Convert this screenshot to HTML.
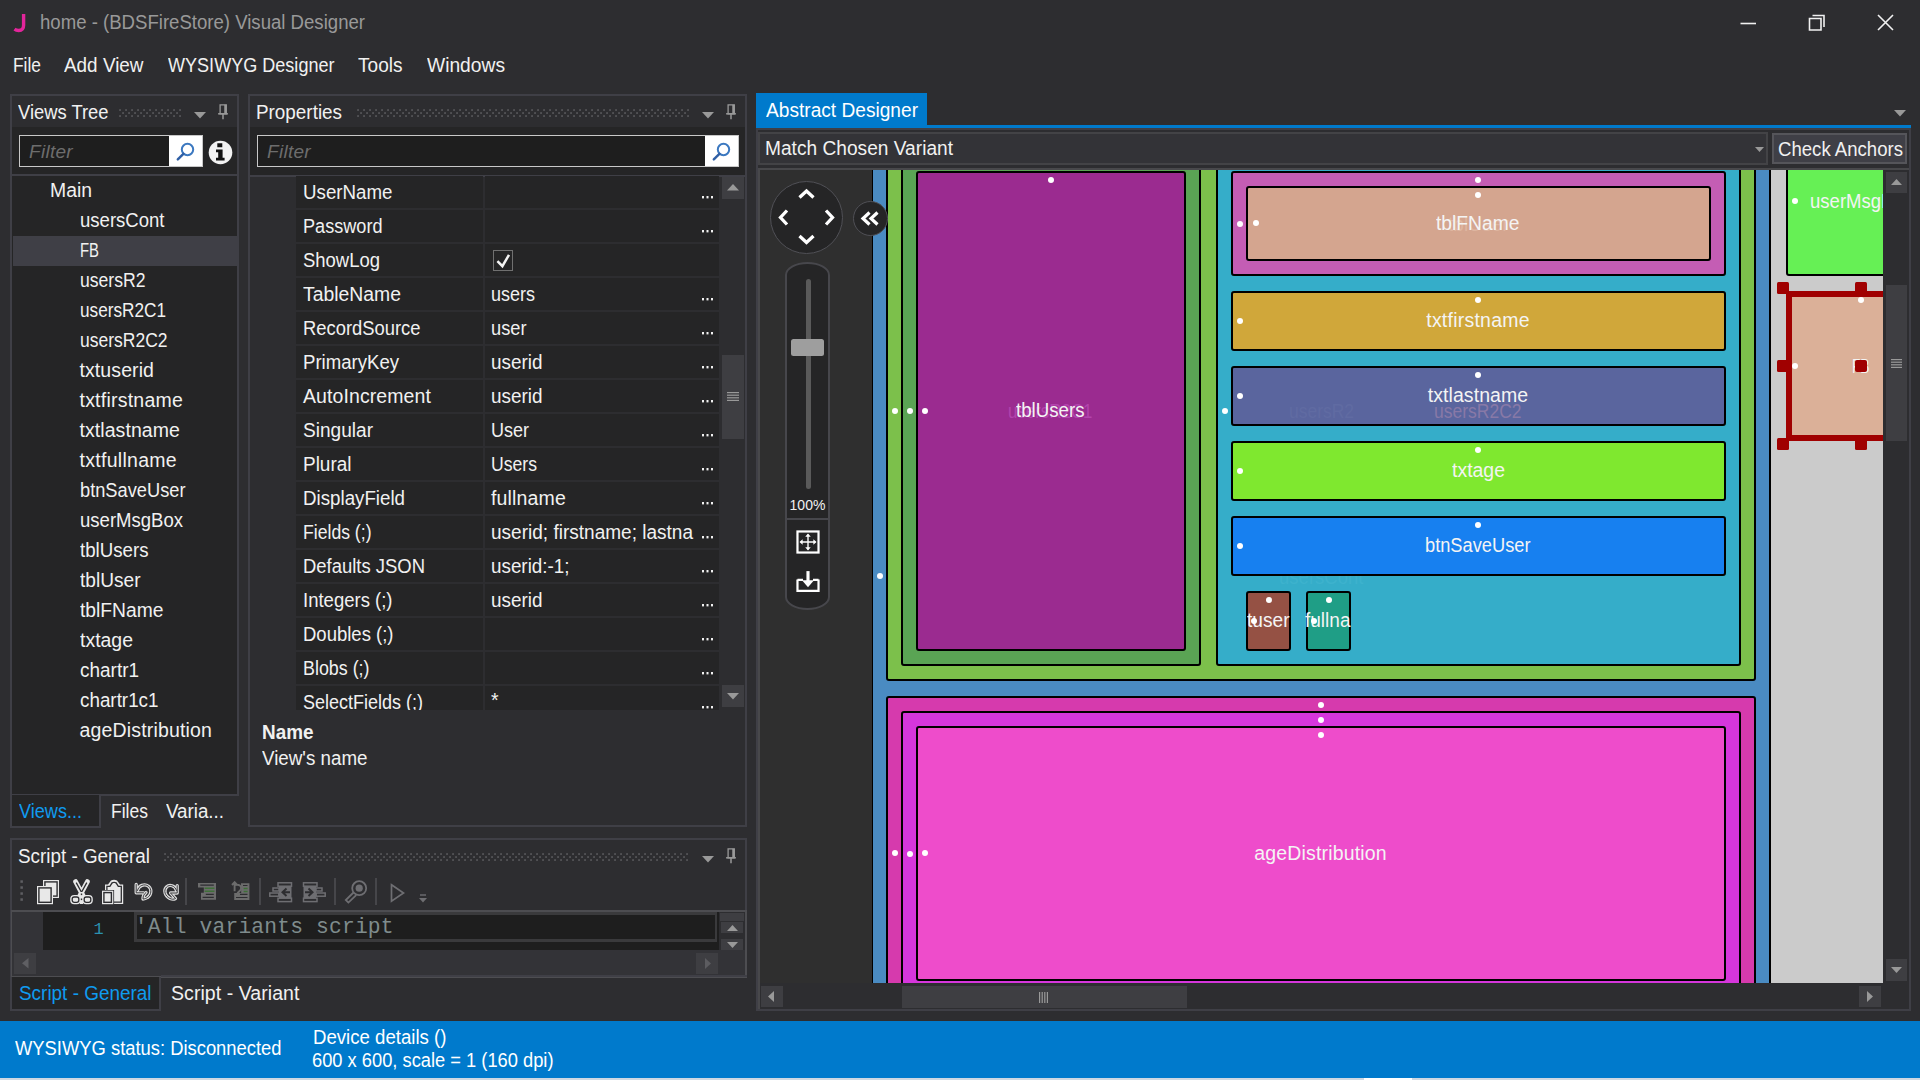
<!DOCTYPE html>
<html><head><meta charset="utf-8"><title>home - (BDSFireStore) Visual Designer</title>
<style>
html,body{margin:0;padding:0;width:1920px;height:1080px;overflow:hidden;background:#2d2d30;}
body{position:relative;font-family:"Liberation Sans",sans-serif;}
div,svg{position:absolute;box-sizing:border-box;}
</style></head><body>

<svg style="left:13px;top:13px;" width="14" height="20" viewBox="0 0 14 20"><path d="M10.6 1v11.3c0 3.6-2.1 5.2-4.9 5.2-1.6 0-3-.4-4.2-1.3" fill="none" stroke="#e3259b" stroke-width="3.4"/></svg>
<div style="left:40.00px;top:10.20px;font-size:19.5px;line-height:25px;color:#999999;white-space:nowrap;transform:scaleX(0.9530);transform-origin:0 0;">home - (BDSFireStore) Visual Designer</div>
<svg style="left:1735px;top:10px;" width="170" height="26" viewBox="0 0 170 26"><path d="M5.5 13.5H21" stroke="#f1f1f1" stroke-width="1.6" fill="none"/><path d="M77.5 5.5h11.5v11.5 M74.5 8.5h11.5v11.5h-11.5z" stroke="#f1f1f1" stroke-width="1.6" fill="none"/><path d="M143 5l15 15M158 5l-15 15" stroke="#f1f1f1" stroke-width="1.6" fill="none"/></svg>
<div style="left:13.00px;top:53.20px;font-size:19.5px;line-height:25px;color:#f1f1f1;white-space:nowrap;transform:scaleX(0.8911);transform-origin:0 0;">File</div>
<div style="left:64.00px;top:53.20px;font-size:19.5px;line-height:25px;color:#f1f1f1;white-space:nowrap;transform:scaleX(0.9692);transform-origin:0 0;">Add View</div>
<div style="left:168.00px;top:53.20px;font-size:19.5px;line-height:25px;color:#f1f1f1;white-space:nowrap;transform:scaleX(0.9257);transform-origin:0 0;">WYSIWYG Designer</div>
<div style="left:358.00px;top:53.20px;font-size:19.5px;line-height:25px;color:#f1f1f1;white-space:nowrap;transform:scaleX(0.9775);transform-origin:0 0;">Tools</div>
<div style="left:427.00px;top:53.20px;font-size:19.5px;line-height:25px;color:#f1f1f1;white-space:nowrap;transform:scaleX(0.9860);transform-origin:0 0;">Windows</div>
<div style="left:10px;top:94px;width:229px;height:702px;background:#2d2d30;border:2px solid #3f3f46;"></div>
<div style="left:12px;top:127px;width:225px;height:48px;background:#252526;"></div>
<div style="left:18.00px;top:99.70px;font-size:19.5px;line-height:25px;color:#f1f1f1;white-space:nowrap;transform:scaleX(0.9417);transform-origin:0 0;">Views Tree</div>
<svg style="left:119px;top:109px;" width="62" height="8" viewBox="0 0 62 8"><defs><pattern id="g10_94" width="6" height="6" patternUnits="userSpaceOnUse"><rect x="0.2" y="0.2" width="1.7" height="1.7" fill="#58585c"/><rect x="3.2" y="3.2" width="1.7" height="1.7" fill="#58585c"/></pattern></defs><rect width="62" height="8" fill="url(#g10_94)"/></svg>
<svg style="left:194px;top:112px;" width="12" height="7" viewBox="0 0 12 7"><path d="M0 0h12l-6 6.5z" fill="#999"/></svg>
<svg style="left:217px;top:103px;" width="12" height="17" viewBox="0 0 12 17"><path d="M3.1 1.8h6.2v9h-6.2z" fill="none" stroke="#999" stroke-width="1.3"/><path d="M8.4 1.8v9" stroke="#999" stroke-width="2.3"/><path d="M1.1 10.8h9.8" stroke="#999" stroke-width="1.5"/><path d="M6 11v5.2" stroke="#999" stroke-width="1.5"/></svg>
<div style="left:19px;top:135px;width:183.5px;height:32px;background:#1e1e1e;border:1px solid #c8c8c8;"></div>
<div style="left:168.5px;top:136px;width:33px;height:30px;background:#ffffff;"></div>
<svg style="left:173.9px;top:141.3px;" width="22" height="22" viewBox="0 0 22 22"><circle cx="13.5" cy="8.5" r="5.7" fill="none" stroke="#3b78c0" stroke-width="2"/><path d="M9.4 12.8L3.8 18.4" stroke="#2f5fa5" stroke-width="2.4" stroke-linecap="round"/></svg>
<div style="left:29.00px;top:139.20px;font-size:19px;line-height:25px;color:#6d6d6d;white-space:nowrap;letter-spacing:0.296px;font-style:italic;">Filter</div>
<svg style="left:208px;top:140px;" width="25" height="25" viewBox="0 0 25 25"><circle cx="12.5" cy="12.5" r="11.8" fill="#f2f2f2"/><path d="M9.3 3.3h5v4h-5z M8 9.6h6.6v8.2h2v2.6H8v-2.6h2.2v-5.6H8z" fill="#111"/></svg>
<div style="left:12px;top:174px;width:225px;height:620px;background:#252526;border-top:2px solid #3f3f46;"></div>
<div style="left:13px;top:236px;width:224px;height:30px;background:#3f3f46;"></div>
<div style="left:49.50px;top:178.20px;font-size:19.5px;line-height:25px;color:#f1f1f1;white-space:nowrap;transform:scaleX(0.9937);transform-origin:0 0;">Main</div>
<div style="left:79.50px;top:208.20px;font-size:19.5px;line-height:25px;color:#f1f1f1;white-space:nowrap;transform:scaleX(0.9508);transform-origin:0 0;">usersCont</div>
<div style="left:79.50px;top:238.20px;font-size:19.5px;line-height:25px;color:#f1f1f1;white-space:nowrap;transform:scaleX(0.7625);transform-origin:0 0;">FB</div>
<div style="left:79.50px;top:268.20px;font-size:19.5px;line-height:25px;color:#f1f1f1;white-space:nowrap;transform:scaleX(0.9021);transform-origin:0 0;">usersR2</div>
<div style="left:79.50px;top:298.20px;font-size:19.5px;line-height:25px;color:#f1f1f1;white-space:nowrap;transform:scaleX(0.8817);transform-origin:0 0;">usersR2C1</div>
<div style="left:79.50px;top:328.20px;font-size:19.5px;line-height:25px;color:#f1f1f1;white-space:nowrap;transform:scaleX(0.8971);transform-origin:0 0;">usersR2C2</div>
<div style="left:79.50px;top:358.20px;font-size:19.5px;line-height:25px;color:#f1f1f1;white-space:nowrap;letter-spacing:0.089px;">txtuserid</div>
<div style="left:79.50px;top:388.20px;font-size:19.5px;line-height:25px;color:#f1f1f1;white-space:nowrap;letter-spacing:0.227px;">txtfirstname</div>
<div style="left:79.50px;top:418.20px;font-size:19.5px;line-height:25px;color:#f1f1f1;white-space:nowrap;letter-spacing:0.072px;">txtlastname</div>
<div style="left:79.50px;top:448.20px;font-size:19.5px;line-height:25px;color:#f1f1f1;white-space:nowrap;letter-spacing:0.292px;">txtfullname</div>
<div style="left:79.50px;top:478.20px;font-size:19.5px;line-height:25px;color:#f1f1f1;white-space:nowrap;transform:scaleX(0.9359);transform-origin:0 0;">btnSaveUser</div>
<div style="left:79.50px;top:508.20px;font-size:19.5px;line-height:25px;color:#f1f1f1;white-space:nowrap;transform:scaleX(0.9504);transform-origin:0 0;">userMsgBox</div>
<div style="left:79.50px;top:538.20px;font-size:19.5px;line-height:25px;color:#f1f1f1;white-space:nowrap;transform:scaleX(0.9578);transform-origin:0 0;">tblUsers</div>
<div style="left:79.50px;top:568.20px;font-size:19.5px;line-height:25px;color:#f1f1f1;white-space:nowrap;transform:scaleX(0.9795);transform-origin:0 0;">tblUser</div>
<div style="left:79.50px;top:598.20px;font-size:19.5px;line-height:25px;color:#f1f1f1;white-space:nowrap;transform:scaleX(0.9879);transform-origin:0 0;">tblFName</div>
<div style="left:79.50px;top:628.20px;font-size:19.5px;line-height:25px;color:#f1f1f1;white-space:nowrap;transform:scaleX(0.9977);transform-origin:0 0;">txtage</div>
<div style="left:79.50px;top:658.20px;font-size:19.5px;line-height:25px;color:#f1f1f1;white-space:nowrap;transform:scaleX(0.9721);transform-origin:0 0;">chartr1</div>
<div style="left:79.50px;top:688.20px;font-size:19.5px;line-height:25px;color:#f1f1f1;white-space:nowrap;transform:scaleX(0.9657);transform-origin:0 0;">chartr1c1</div>
<div style="left:79.50px;top:718.20px;font-size:19.5px;line-height:25px;color:#f1f1f1;white-space:nowrap;letter-spacing:0.162px;">ageDistribution</div>
<div style="left:10px;top:794px;width:91px;height:34px;background:#252526;border:2px solid #3f3f46;border-top:1px solid #3f3f46;"></div>
<div style="left:18.50px;top:798.70px;font-size:19.5px;line-height:25px;color:#0f9bf0;white-space:nowrap;transform:scaleX(0.9276);transform-origin:0 0;">Views...</div>
<div style="left:111.00px;top:798.70px;font-size:19.5px;line-height:25px;color:#f1f1f1;white-space:nowrap;transform:scaleX(0.8987);transform-origin:0 0;">Files</div>
<div style="left:166.00px;top:798.70px;font-size:19.5px;line-height:25px;color:#f1f1f1;white-space:nowrap;transform:scaleX(0.9614);transform-origin:0 0;">Varia...</div>
<div style="left:247.5px;top:94px;width:499.5px;height:733px;background:#2d2d30;border:2px solid #3f3f46;"></div>
<div style="left:249.5px;top:127px;width:495.5px;height:48px;background:#252526;"></div>
<div style="left:256.00px;top:99.70px;font-size:19.5px;line-height:25px;color:#f1f1f1;white-space:nowrap;transform:scaleX(0.9677);transform-origin:0 0;">Properties</div>
<svg style="left:357px;top:109px;" width="332" height="8" viewBox="0 0 332 8"><defs><pattern id="g248_94" width="6" height="6" patternUnits="userSpaceOnUse"><rect x="0.2" y="0.2" width="1.7" height="1.7" fill="#58585c"/><rect x="3.2" y="3.2" width="1.7" height="1.7" fill="#58585c"/></pattern></defs><rect width="332" height="8" fill="url(#g248_94)"/></svg>
<svg style="left:702px;top:112px;" width="12" height="7" viewBox="0 0 12 7"><path d="M0 0h12l-6 6.5z" fill="#999"/></svg>
<svg style="left:725px;top:103px;" width="12" height="17" viewBox="0 0 12 17"><path d="M3.1 1.8h6.2v9h-6.2z" fill="none" stroke="#999" stroke-width="1.3"/><path d="M8.4 1.8v9" stroke="#999" stroke-width="2.3"/><path d="M1.1 10.8h9.8" stroke="#999" stroke-width="1.5"/><path d="M6 11v5.2" stroke="#999" stroke-width="1.5"/></svg>
<div style="left:257px;top:135px;width:482px;height:32px;background:#1e1e1e;border:1px solid #c8c8c8;"></div>
<div style="left:705px;top:136px;width:33px;height:30px;background:#ffffff;"></div>
<svg style="left:710.4px;top:141.3px;" width="22" height="22" viewBox="0 0 22 22"><circle cx="13.5" cy="8.5" r="5.7" fill="none" stroke="#3b78c0" stroke-width="2"/><path d="M9.4 12.8L3.8 18.4" stroke="#2f5fa5" stroke-width="2.4" stroke-linecap="round"/></svg>
<div style="left:267.00px;top:139.20px;font-size:19px;line-height:25px;color:#6d6d6d;white-space:nowrap;letter-spacing:0.296px;font-style:italic;">Filter</div>
<div style="left:249.5px;top:175px;width:495.5px;height:535px;background:#2d2d30;border-top:2px solid #3f3f46;overflow:hidden;"></div>
<div style="left:296px;top:176px;width:187px;height:32px;background:#252526;"></div>
<div style="left:485px;top:176px;width:234px;height:32px;background:#252526;"></div>
<div style="left:0;top:0;width:1920px;height:710px;overflow:hidden;background:none;">
<div style="left:303.00px;top:180.20px;font-size:19.5px;line-height:25px;color:#f1f1f1;white-space:nowrap;transform:scaleX(0.9604);transform-origin:0 0;">UserName</div>
<svg style="left:702px;top:196px;" width="12" height="3" viewBox="0 0 12 3"><rect x="0" y="0" width="2" height="2.4" fill="#f1f1f1"/><rect x="4.5" y="0" width="2" height="2.4" fill="#f1f1f1"/><rect x="9" y="0" width="2" height="2.4" fill="#f1f1f1"/></svg>
</div>
<div style="left:296px;top:210px;width:187px;height:32px;background:#252526;"></div>
<div style="left:485px;top:210px;width:234px;height:32px;background:#252526;"></div>
<div style="left:0;top:0;width:1920px;height:710px;overflow:hidden;background:none;">
<div style="left:303.00px;top:214.20px;font-size:19.5px;line-height:25px;color:#f1f1f1;white-space:nowrap;transform:scaleX(0.9285);transform-origin:0 0;">Password</div>
<svg style="left:702px;top:230px;" width="12" height="3" viewBox="0 0 12 3"><rect x="0" y="0" width="2" height="2.4" fill="#f1f1f1"/><rect x="4.5" y="0" width="2" height="2.4" fill="#f1f1f1"/><rect x="9" y="0" width="2" height="2.4" fill="#f1f1f1"/></svg>
</div>
<div style="left:296px;top:244px;width:187px;height:32px;background:#252526;"></div>
<div style="left:485px;top:244px;width:234px;height:32px;background:#252526;"></div>
<div style="left:0;top:0;width:1920px;height:710px;overflow:hidden;background:none;">
<div style="left:303.00px;top:248.20px;font-size:19.5px;line-height:25px;color:#f1f1f1;white-space:nowrap;transform:scaleX(0.9469);transform-origin:0 0;">ShowLog</div>
<div style="left:493px;top:250px;width:20px;height:21px;background:#252526;border:1.5px solid #707070;"></div>
<svg style="left:495px;top:252px;" width="16" height="17" viewBox="0 0 16 17"><path d="M2.4 9.2l5 5L14 2.8" stroke="#f4f4f4" stroke-width="2.5" fill="none"/></svg>
</div>
<div style="left:296px;top:278px;width:187px;height:32px;background:#252526;"></div>
<div style="left:485px;top:278px;width:234px;height:32px;background:#252526;"></div>
<div style="left:0;top:0;width:1920px;height:710px;overflow:hidden;background:none;">
<div style="left:303.00px;top:282.20px;font-size:19.5px;line-height:25px;color:#f1f1f1;white-space:nowrap;transform:scaleX(0.9936);transform-origin:0 0;">TableName</div>
<div style="left:491.00px;top:282.20px;font-size:19.5px;line-height:25px;color:#f1f1f1;white-space:nowrap;transform:scaleX(0.9227);transform-origin:0 0;">users</div>
<svg style="left:702px;top:298px;" width="12" height="3" viewBox="0 0 12 3"><rect x="0" y="0" width="2" height="2.4" fill="#f1f1f1"/><rect x="4.5" y="0" width="2" height="2.4" fill="#f1f1f1"/><rect x="9" y="0" width="2" height="2.4" fill="#f1f1f1"/></svg>
</div>
<div style="left:296px;top:312px;width:187px;height:32px;background:#252526;"></div>
<div style="left:485px;top:312px;width:234px;height:32px;background:#252526;"></div>
<div style="left:0;top:0;width:1920px;height:710px;overflow:hidden;background:none;">
<div style="left:303.00px;top:316.20px;font-size:19.5px;line-height:25px;color:#f1f1f1;white-space:nowrap;transform:scaleX(0.9427);transform-origin:0 0;">RecordSource</div>
<div style="left:491.00px;top:316.20px;font-size:19.5px;line-height:25px;color:#f1f1f1;white-space:nowrap;transform:scaleX(0.9358);transform-origin:0 0;">user</div>
<svg style="left:702px;top:332px;" width="12" height="3" viewBox="0 0 12 3"><rect x="0" y="0" width="2" height="2.4" fill="#f1f1f1"/><rect x="4.5" y="0" width="2" height="2.4" fill="#f1f1f1"/><rect x="9" y="0" width="2" height="2.4" fill="#f1f1f1"/></svg>
</div>
<div style="left:296px;top:346px;width:187px;height:32px;background:#252526;"></div>
<div style="left:485px;top:346px;width:234px;height:32px;background:#252526;"></div>
<div style="left:0;top:0;width:1920px;height:710px;overflow:hidden;background:none;">
<div style="left:303.00px;top:350.20px;font-size:19.5px;line-height:25px;color:#f1f1f1;white-space:nowrap;transform:scaleX(0.9527);transform-origin:0 0;">PrimaryKey</div>
<div style="left:491.00px;top:350.20px;font-size:19.5px;line-height:25px;color:#f1f1f1;white-space:nowrap;transform:scaleX(0.9697);transform-origin:0 0;">userid</div>
<svg style="left:702px;top:366px;" width="12" height="3" viewBox="0 0 12 3"><rect x="0" y="0" width="2" height="2.4" fill="#f1f1f1"/><rect x="4.5" y="0" width="2" height="2.4" fill="#f1f1f1"/><rect x="9" y="0" width="2" height="2.4" fill="#f1f1f1"/></svg>
</div>
<div style="left:296px;top:380px;width:187px;height:32px;background:#252526;"></div>
<div style="left:485px;top:380px;width:234px;height:32px;background:#252526;"></div>
<div style="left:0;top:0;width:1920px;height:710px;overflow:hidden;background:none;">
<div style="left:303.00px;top:384.20px;font-size:19.5px;line-height:25px;color:#f1f1f1;white-space:nowrap;letter-spacing:0.091px;">AutoIncrement</div>
<div style="left:491.00px;top:384.20px;font-size:19.5px;line-height:25px;color:#f1f1f1;white-space:nowrap;transform:scaleX(0.9697);transform-origin:0 0;">userid</div>
<svg style="left:702px;top:400px;" width="12" height="3" viewBox="0 0 12 3"><rect x="0" y="0" width="2" height="2.4" fill="#f1f1f1"/><rect x="4.5" y="0" width="2" height="2.4" fill="#f1f1f1"/><rect x="9" y="0" width="2" height="2.4" fill="#f1f1f1"/></svg>
</div>
<div style="left:296px;top:414px;width:187px;height:32px;background:#252526;"></div>
<div style="left:485px;top:414px;width:234px;height:32px;background:#252526;"></div>
<div style="left:0;top:0;width:1920px;height:710px;overflow:hidden;background:none;">
<div style="left:303.00px;top:418.20px;font-size:19.5px;line-height:25px;color:#f1f1f1;white-space:nowrap;transform:scaleX(0.9784);transform-origin:0 0;">Singular</div>
<div style="left:491.00px;top:418.20px;font-size:19.5px;line-height:25px;color:#f1f1f1;white-space:nowrap;transform:scaleX(0.9230);transform-origin:0 0;">User</div>
<svg style="left:702px;top:434px;" width="12" height="3" viewBox="0 0 12 3"><rect x="0" y="0" width="2" height="2.4" fill="#f1f1f1"/><rect x="4.5" y="0" width="2" height="2.4" fill="#f1f1f1"/><rect x="9" y="0" width="2" height="2.4" fill="#f1f1f1"/></svg>
</div>
<div style="left:296px;top:448px;width:187px;height:32px;background:#252526;"></div>
<div style="left:485px;top:448px;width:234px;height:32px;background:#252526;"></div>
<div style="left:0;top:0;width:1920px;height:710px;overflow:hidden;background:none;">
<div style="left:303.00px;top:452.20px;font-size:19.5px;line-height:25px;color:#f1f1f1;white-space:nowrap;transform:scaleX(0.9728);transform-origin:0 0;">Plural</div>
<div style="left:491.00px;top:452.20px;font-size:19.5px;line-height:25px;color:#f1f1f1;white-space:nowrap;transform:scaleX(0.9034);transform-origin:0 0;">Users</div>
<svg style="left:702px;top:468px;" width="12" height="3" viewBox="0 0 12 3"><rect x="0" y="0" width="2" height="2.4" fill="#f1f1f1"/><rect x="4.5" y="0" width="2" height="2.4" fill="#f1f1f1"/><rect x="9" y="0" width="2" height="2.4" fill="#f1f1f1"/></svg>
</div>
<div style="left:296px;top:482px;width:187px;height:32px;background:#252526;"></div>
<div style="left:485px;top:482px;width:234px;height:32px;background:#252526;"></div>
<div style="left:0;top:0;width:1920px;height:710px;overflow:hidden;background:none;">
<div style="left:303.00px;top:486.20px;font-size:19.5px;line-height:25px;color:#f1f1f1;white-space:nowrap;transform:scaleX(0.9604);transform-origin:0 0;">DisplayField</div>
<div style="left:491.00px;top:486.20px;font-size:19.5px;line-height:25px;color:#f1f1f1;white-space:nowrap;letter-spacing:0.162px;">fullname</div>
<svg style="left:702px;top:502px;" width="12" height="3" viewBox="0 0 12 3"><rect x="0" y="0" width="2" height="2.4" fill="#f1f1f1"/><rect x="4.5" y="0" width="2" height="2.4" fill="#f1f1f1"/><rect x="9" y="0" width="2" height="2.4" fill="#f1f1f1"/></svg>
</div>
<div style="left:296px;top:516px;width:187px;height:32px;background:#252526;"></div>
<div style="left:485px;top:516px;width:234px;height:32px;background:#252526;"></div>
<div style="left:0;top:0;width:1920px;height:710px;overflow:hidden;background:none;">
<div style="left:303.00px;top:520.20px;font-size:19.5px;line-height:25px;color:#f1f1f1;white-space:nowrap;transform:scaleX(0.9032);transform-origin:0 0;">Fields (;)</div>
<div style="left:491.00px;top:520.20px;font-size:19.5px;line-height:25px;color:#f1f1f1;white-space:nowrap;transform:scaleX(0.9758);transform-origin:0 0;">userid; firstname; lastna</div>
<svg style="left:702px;top:536px;" width="12" height="3" viewBox="0 0 12 3"><rect x="0" y="0" width="2" height="2.4" fill="#f1f1f1"/><rect x="4.5" y="0" width="2" height="2.4" fill="#f1f1f1"/><rect x="9" y="0" width="2" height="2.4" fill="#f1f1f1"/></svg>
</div>
<div style="left:296px;top:550px;width:187px;height:32px;background:#252526;"></div>
<div style="left:485px;top:550px;width:234px;height:32px;background:#252526;"></div>
<div style="left:0;top:0;width:1920px;height:710px;overflow:hidden;background:none;">
<div style="left:303.00px;top:554.20px;font-size:19.5px;line-height:25px;color:#f1f1f1;white-space:nowrap;transform:scaleX(0.9460);transform-origin:0 0;">Defaults JSON</div>
<div style="left:491.00px;top:554.20px;font-size:19.5px;line-height:25px;color:#f1f1f1;white-space:nowrap;transform:scaleX(0.9657);transform-origin:0 0;">userid:-1;</div>
<svg style="left:702px;top:570px;" width="12" height="3" viewBox="0 0 12 3"><rect x="0" y="0" width="2" height="2.4" fill="#f1f1f1"/><rect x="4.5" y="0" width="2" height="2.4" fill="#f1f1f1"/><rect x="9" y="0" width="2" height="2.4" fill="#f1f1f1"/></svg>
</div>
<div style="left:296px;top:584px;width:187px;height:32px;background:#252526;"></div>
<div style="left:485px;top:584px;width:234px;height:32px;background:#252526;"></div>
<div style="left:0;top:0;width:1920px;height:710px;overflow:hidden;background:none;">
<div style="left:303.00px;top:588.20px;font-size:19.5px;line-height:25px;color:#f1f1f1;white-space:nowrap;transform:scaleX(0.9493);transform-origin:0 0;">Integers (;)</div>
<div style="left:491.00px;top:588.20px;font-size:19.5px;line-height:25px;color:#f1f1f1;white-space:nowrap;transform:scaleX(0.9697);transform-origin:0 0;">userid</div>
<svg style="left:702px;top:604px;" width="12" height="3" viewBox="0 0 12 3"><rect x="0" y="0" width="2" height="2.4" fill="#f1f1f1"/><rect x="4.5" y="0" width="2" height="2.4" fill="#f1f1f1"/><rect x="9" y="0" width="2" height="2.4" fill="#f1f1f1"/></svg>
</div>
<div style="left:296px;top:618px;width:187px;height:32px;background:#252526;"></div>
<div style="left:485px;top:618px;width:234px;height:32px;background:#252526;"></div>
<div style="left:0;top:0;width:1920px;height:710px;overflow:hidden;background:none;">
<div style="left:303.00px;top:622.20px;font-size:19.5px;line-height:25px;color:#f1f1f1;white-space:nowrap;transform:scaleX(0.9490);transform-origin:0 0;">Doubles (;)</div>
<svg style="left:702px;top:638px;" width="12" height="3" viewBox="0 0 12 3"><rect x="0" y="0" width="2" height="2.4" fill="#f1f1f1"/><rect x="4.5" y="0" width="2" height="2.4" fill="#f1f1f1"/><rect x="9" y="0" width="2" height="2.4" fill="#f1f1f1"/></svg>
</div>
<div style="left:296px;top:652px;width:187px;height:32px;background:#252526;"></div>
<div style="left:485px;top:652px;width:234px;height:32px;background:#252526;"></div>
<div style="left:0;top:0;width:1920px;height:710px;overflow:hidden;background:none;">
<div style="left:303.00px;top:656.20px;font-size:19.5px;line-height:25px;color:#f1f1f1;white-space:nowrap;transform:scaleX(0.9160);transform-origin:0 0;">Blobs (;)</div>
<svg style="left:702px;top:672px;" width="12" height="3" viewBox="0 0 12 3"><rect x="0" y="0" width="2" height="2.4" fill="#f1f1f1"/><rect x="4.5" y="0" width="2" height="2.4" fill="#f1f1f1"/><rect x="9" y="0" width="2" height="2.4" fill="#f1f1f1"/></svg>
</div>
<div style="left:296px;top:686px;width:187px;height:24px;background:#252526;"></div>
<div style="left:485px;top:686px;width:234px;height:24px;background:#252526;"></div>
<div style="left:0;top:0;width:1920px;height:710px;overflow:hidden;background:none;">
<div style="left:303.00px;top:690.20px;font-size:19.5px;line-height:25px;color:#f1f1f1;white-space:nowrap;transform:scaleX(0.9228);transform-origin:0 0;">SelectFields (;)</div>
<div style="left:491.00px;top:687.70px;font-size:19.5px;line-height:25px;color:#f1f1f1;white-space:nowrap;">*</div>
<svg style="left:702px;top:706px;" width="12" height="3" viewBox="0 0 12 3"><rect x="0" y="0" width="2" height="2.4" fill="#f1f1f1"/><rect x="4.5" y="0" width="2" height="2.4" fill="#f1f1f1"/><rect x="9" y="0" width="2" height="2.4" fill="#f1f1f1"/></svg>
</div>
<div style="left:722px;top:177px;width:22px;height:22px;background:#3e3e42;"></div>
<svg style="left:727px;top:184px;" width="12" height="7" viewBox="0 0 12 7"><path d="M0 6.5h12l-6-6.5z" fill="#999"/></svg>
<div style="left:722px;top:355px;width:22px;height:84px;background:#3e3e42;"></div>
<svg style="left:727px;top:392px;" width="12" height="11" viewBox="0 0 12 11"><rect x="0" y="0.0" width="12" height="1.2" fill="#999"/><rect x="0" y="2.6" width="12" height="1.2" fill="#999"/><rect x="0" y="5.2" width="12" height="1.2" fill="#999"/><rect x="0" y="7.8" width="12" height="1.2" fill="#999"/></svg>
<div style="left:722px;top:685px;width:22px;height:22px;background:#3e3e42;"></div>
<svg style="left:727px;top:693px;" width="12" height="7" viewBox="0 0 12 7"><path d="M0 0h12l-6 6.5z" fill="#999"/></svg>
<div style="left:261.50px;top:720.20px;font-size:19.5px;line-height:25px;color:#f1f1f1;white-space:nowrap;transform:scaleX(0.9697);transform-origin:0 0;font-weight:bold;">Name</div>
<div style="left:261.50px;top:746.20px;font-size:19.5px;line-height:25px;color:#f1f1f1;white-space:nowrap;transform:scaleX(0.9627);transform-origin:0 0;">View's name</div>
<div style="left:10px;top:838px;width:737px;height:139px;background:#2d2d30;border:2px solid #3f3f46;border-bottom:none;"></div>
<div style="left:18.00px;top:843.70px;font-size:19.5px;line-height:25px;color:#f1f1f1;white-space:nowrap;transform:scaleX(0.9667);transform-origin:0 0;">Script - General</div>
<svg style="left:164px;top:853px;" width="525" height="8" viewBox="0 0 525 8"><defs><pattern id="g10_838" width="6" height="6" patternUnits="userSpaceOnUse"><rect x="0.2" y="0.2" width="1.7" height="1.7" fill="#58585c"/><rect x="3.2" y="3.2" width="1.7" height="1.7" fill="#58585c"/></pattern></defs><rect width="525" height="8" fill="url(#g10_838)"/></svg>
<svg style="left:702px;top:856px;" width="12" height="7" viewBox="0 0 12 7"><path d="M0 0h12l-6 6.5z" fill="#999"/></svg>
<svg style="left:725px;top:847px;" width="12" height="17" viewBox="0 0 12 17"><path d="M3.1 1.8h6.2v9h-6.2z" fill="none" stroke="#999" stroke-width="1.3"/><path d="M8.4 1.8v9" stroke="#999" stroke-width="2.3"/><path d="M1.1 10.8h9.8" stroke="#999" stroke-width="1.5"/><path d="M6 11v5.2" stroke="#999" stroke-width="1.5"/></svg>
<svg style="left:19px;top:880px;" width="6" height="24" viewBox="0 0 6 24"><rect x="1.4" y="0.3" width="2.5" height="2.5" fill="#5f5f63"/><rect x="1.4" y="6.3" width="2.5" height="2.5" fill="#5f5f63"/><rect x="1.4" y="12.3" width="2.5" height="2.5" fill="#5f5f63"/><rect x="1.4" y="18.3" width="2.5" height="2.5" fill="#5f5f63"/></svg>
<svg style="left:36px;top:879px;" width="24" height="27" viewBox="0 0 24 27"><rect x="7" y="1" width="16" height="18" fill="#e8e8e8"/><rect x="8.9" y="2.9" width="12.2" height="14.2" fill="none" stroke="#2d2d30" stroke-width="1.4"/><rect x="1" y="7" width="16" height="18.2" fill="#e8e8e8"/><rect x="2.9" y="8.9" width="12.2" height="14.4" fill="none" stroke="#2d2d30" stroke-width="1.4"/></svg>
<svg style="left:69px;top:879px;" width="25" height="27" viewBox="0 0 25 27"><path d="M6.6 2.6L14 16.5M18.4 2.6L11 16.5" fill="none" stroke="#e8e8e8" stroke-width="4.8" stroke-linecap="round"/><path d="M7.2 3.6L12.5 13.2M17.8 3.6L12.5 13.2" fill="none" stroke="#2d2d30" stroke-width="1.3"/><rect x="1.2" y="16" width="10.6" height="9.3" rx="4" fill="#e8e8e8"/><rect x="13.2" y="16" width="10.6" height="9.3" rx="4" fill="#e8e8e8"/><rect x="3.2" y="18" width="6.6" height="5.3" rx="2" fill="none" stroke="#2d2d30" stroke-width="1.3"/><rect x="15.2" y="18" width="6.6" height="5.3" rx="2" fill="none" stroke="#2d2d30" stroke-width="1.3"/><rect x="11" y="13" width="3" height="12" fill="#e8e8e8"/><rect x="11.8" y="14.5" width="1.4" height="1.6" fill="#2d2d30"/><rect x="11.8" y="19.5" width="1.4" height="1.6" fill="#2d2d30"/></svg>
<svg style="left:101px;top:879px;" width="24" height="27" viewBox="0 0 24 27"><path d="M4 5.5h3L10 1.6q3-1.6 6 0l3 3.9h3.2V25H4z" fill="#e8e8e8"/><path d="M5.9 7.4h3l2.2-3.6q2-1 4 0l2.2 3.6h3v15.7H5.9z" fill="none" stroke="#2d2d30" stroke-width="1.3"/><circle cx="13.1" cy="5" r="1" fill="#e8e8e8"/><rect x="0.3" y="11" width="12.8" height="15" fill="#2d2d30"/><rect x="1" y="11.7" width="11.3" height="13.5" fill="#e8e8e8"/><rect x="2.9" y="13.6" width="7.5" height="9.7" fill="none" stroke="#2d2d30" stroke-width="1.4"/></svg>
<svg style="left:133px;top:881px;" width="21" height="21" viewBox="0 0 21 21"><path d="M3.2 3.5V11.8H10.5M4.5 9.5C5.5 4.5 11.5 2.2 15.5 5.2 19 8 18.5 14 14.5 16.5 13 17.5 11.5 18 10 18 10 15 11 13 13 11.5" fill="none" stroke="#dcdcdc" stroke-width="3.3" stroke-linejoin="round" stroke-linecap="round"/><path d="M3.2 3.5V11.8H10.5M4.5 9.5C5.5 4.5 11.5 2.2 15.5 5.2 19 8 18.5 14 14.5 16.5 13 17.5 11.5 18 10 18 10 15 11 13 13 11.5" fill="none" stroke="#2d2d30" stroke-width="0.9" stroke-linejoin="round" stroke-linecap="round"/></svg>
<svg style="left:162px;top:882px;" width="18" height="20" viewBox="0 0 18 20"><path d="M15.2 3.6V11H8.6M14.5 8.5C13 3.5 7.5 2 4.5 5 1.2 8.5 3 14 8 16.5 10 17.3 11.5 17.6 13.5 16.5L9 11.5" fill="none" stroke="#dcdcdc" stroke-width="3.3" stroke-linejoin="round" stroke-linecap="round"/><path d="M15.2 3.6V11H8.6M14.5 8.5C13 3.5 7.5 2 4.5 5 1.2 8.5 3 14 8 16.5 10 17.3 11.5 17.6 13.5 16.5L9 11.5" fill="none" stroke="#2d2d30" stroke-width="0.9" stroke-linejoin="round" stroke-linecap="round"/></svg>
<div style="left:185px;top:878px;width:2px;height:27px;background:#46464a;"></div>
<div style="left:259px;top:878px;width:2px;height:27px;background:#46464a;"></div>
<div style="left:333.5px;top:878px;width:2px;height:27px;background:#46464a;"></div>
<div style="left:375px;top:878px;width:2px;height:27px;background:#46464a;"></div>
<svg style="left:198px;top:883px;" width="18" height="17" viewBox="0 0 18 17"><path d="M0 0h18v16.8H3V9.8h2.8V4.4H0z" fill="#6c6c6c"/><path d="M2.3 2.2h13.5M7.8 11.3h8M4.6 14.3h11.2" stroke="#2d2d30" stroke-width="1.2"/><path d="M6.6 5.3h9.8M6.6 8.2h9.8" stroke="#3f7038" stroke-width="1.5"/></svg>
<svg style="left:231px;top:880.6px;" width="19" height="19.5" viewBox="0 0 19 19.5"><path d="M10 2.3h8.4V19H3.2v-7h7z" fill="#6c6c6c"/><path d="M12 4.5h4.5M9 13.4h7.5M5 16.5h11.5" stroke="#2d2d30" stroke-width="1.2"/><path d="M12.6 7.6h4M12.6 10.4h4" stroke="#3f7038" stroke-width="1.5"/><path d="M3.6 0.8v9.5M1 4l2.6-2.8L6.2 4M3.6 4.2c4.5-1.6 7.5 1.2 6.2 4.2-.6 1.3-2 2.2-3.4 4" fill="none" stroke="#6c6c6c" stroke-width="1.9"/></svg>
<svg style="left:269px;top:882px;" width="24" height="21" viewBox="0 0 24 21"><rect x="9" y="0.8" width="13.5" height="3.4" fill="none" stroke="#6e6e72" stroke-width="1.5"/><rect x="4" y="6" width="6" height="3" fill="none" stroke="#6e6e72" stroke-width="1.5"/><rect x="0.8" y="11" width="9" height="3.2" fill="none" stroke="#6e6e72" stroke-width="1.5"/><rect x="9" y="16.2" width="13.5" height="3.4" fill="none" stroke="#6e6e72" stroke-width="1.5"/><rect x="10" y="4" width="12.5" height="12" fill="#6e6e72"/><path d="M21 10.2h-7M17.5 6.5l-4 3.7 4 3.7" fill="none" stroke="#2d2d30" stroke-width="2"/></svg>
<svg style="left:302px;top:882px;transform:scaleX(-1);" width="24" height="21" viewBox="0 0 24 21"><rect x="9" y="0.8" width="13.5" height="3.4" fill="none" stroke="#6e6e72" stroke-width="1.5"/><rect x="4" y="6" width="6" height="3" fill="none" stroke="#6e6e72" stroke-width="1.5"/><rect x="0.8" y="11" width="9" height="3.2" fill="none" stroke="#6e6e72" stroke-width="1.5"/><rect x="9" y="16.2" width="13.5" height="3.4" fill="none" stroke="#6e6e72" stroke-width="1.5"/><rect x="10" y="4" width="12.5" height="12" fill="#6e6e72"/><path d="M21 10.2h-7M17.5 6.5l-4 3.7 4 3.7" fill="none" stroke="#2d2d30" stroke-width="2"/></svg>
<svg style="left:344px;top:880px;" width="24" height="24" viewBox="0 0 24 24"><circle cx="15.2" cy="8.2" r="7" fill="none" stroke="#6e6e72" stroke-width="1.8"/><circle cx="15.2" cy="8.2" r="3.6" fill="#6e6e72"/><path d="M9.5 12.5L1.8 20l2.6 2.6 7.8-7.4" fill="none" stroke="#6e6e72" stroke-width="1.8"/></svg>
<svg style="left:390px;top:883px;" width="16" height="20" viewBox="0 0 16 20"><path d="M1.5 1.8L13.5 10 1.5 18.2z" fill="none" stroke="#6e6e72" stroke-width="1.7"/></svg>
<svg style="left:419px;top:894px;" width="8" height="9" viewBox="0 0 8 9"><path d="M1 1h6" stroke="#6e6e72" stroke-width="1.4"/><path d="M0 4h8l-4 4.5z" fill="#6e6e72"/></svg>
<div style="left:11px;top:910px;width:736px;height:67.5px;background:#333337;border:2px solid #4d4d51;border-left-width:1.5px;"></div>
<div style="left:43px;top:912px;width:676px;height:38px;background:#1e1e1e;"></div>
<div style="left:134px;top:912px;width:583px;height:30px;background:#1e1e1e;border:3px solid #3a3a3c;border-right-width:2px;"></div>
<div style="left:93.50px;top:918.70px;font-size:17px;line-height:22px;color:#2b91af;white-space:nowrap;font-family:'Liberation Mono',monospace;">1</div>
<div style="left:134.80px;top:913.20px;font-size:21.3px;line-height:28px;color:#7f8c8d;white-space:nowrap;letter-spacing:0.168px;font-family:'Liberation Mono',monospace;">'All variants script</div>
<div style="left:719px;top:912px;width:26px;height:38px;background:#2d2d30;"></div>
<div style="left:720px;top:913px;width:24px;height:8px;background:#3e3e42;"></div>
<div style="left:721px;top:922px;width:22px;height:11px;background:#3e3e42;"></div>
<svg style="left:727px;top:925px;" width="11" height="6" viewBox="0 0 11 6"><path d="M0 6h11l-5.5-6z" fill="#999"/></svg>
<div style="left:721px;top:939px;width:22px;height:11px;background:#3e3e42;"></div>
<svg style="left:727px;top:942px;" width="11" height="6" viewBox="0 0 11 6"><path d="M0 0h11l-5.5 6z" fill="#999"/></svg>
<div style="left:14px;top:953px;width:22px;height:21px;background:#3e3e42;"></div>
<svg style="left:22px;top:958px;" width="6.5" height="10.5" viewBox="0 0 6.5 10.5"><path d="M6.5 0v10.5L0 5.2z" fill="#5f5f63"/></svg>
<div style="left:696px;top:953px;width:22px;height:21px;background:#3e3e42;"></div>
<svg style="left:705px;top:958px;" width="6" height="11" viewBox="0 0 6 11"><path d="M0 0v11l6-5.5z" fill="#5c5c60"/></svg>
<div style="left:10px;top:977px;width:151px;height:34px;background:#252526;border:2px solid #3f3f46;border-top:none;"></div>
<div style="left:161px;top:975px;width:586px;height:2px;background:#3f3f46;"></div>
<div style="left:18.50px;top:981.20px;font-size:19.5px;line-height:25px;color:#0f9bf0;white-space:nowrap;transform:scaleX(0.9704);transform-origin:0 0;">Script - General</div>
<div style="left:171.00px;top:981.20px;font-size:19.5px;line-height:25px;color:#f1f1f1;white-space:nowrap;letter-spacing:0.062px;">Script - Variant</div>
<div style="left:0px;top:1021px;width:1920px;height:57px;background:#007acc;"></div>
<div style="left:0px;top:1078px;width:1920px;height:2px;background:#cfd8e2;"></div>
<div style="left:1364px;top:1078px;width:48px;height:2px;background:#ffffff;"></div>
<div style="left:15.00px;top:1036.20px;font-size:19.5px;line-height:25px;color:#ffffff;white-space:nowrap;transform:scaleX(0.9422);transform-origin:0 0;">WYSIWYG status: Disconnected</div>
<div style="left:312.50px;top:1025.20px;font-size:19.5px;line-height:25px;color:#ffffff;white-space:nowrap;transform:scaleX(0.9550);transform-origin:0 0;">Device details ()</div>
<div style="left:312.00px;top:1048.20px;font-size:19.5px;line-height:25px;color:#ffffff;white-space:nowrap;transform:scaleX(0.9380);transform-origin:0 0;">600 x 600, scale = 1 (160 dpi)</div>
<div style="left:756px;top:93px;width:171px;height:33px;background:#007acc;"></div>
<div style="left:766.00px;top:98.20px;font-size:19.5px;line-height:25px;color:#ffffff;white-space:nowrap;transform:scaleX(0.9808);transform-origin:0 0;">Abstract Designer</div>
<div style="left:756px;top:125px;width:1155px;height:3px;background:#007acc;"></div>
<svg style="left:1894px;top:110px;" width="12" height="7" viewBox="0 0 12 7"><path d="M0 0h12l-6 6.5z" fill="#999"/></svg>
<div style="left:756px;top:128px;width:1155px;height:883px;background:#2d2d30;border:2px solid #3f3f46;"></div>
<div style="left:758px;top:168px;width:1151px;height:2px;background:#48484b;"></div>
<div style="left:758px;top:168px;width:2px;height:841px;background:#48484b;"></div>
<div style="left:758px;top:132px;width:1010px;height:33px;background:#333337;border:2px solid #434346;"></div>
<div style="left:765.00px;top:136.20px;font-size:19.5px;line-height:25px;color:#f1f1f1;white-space:nowrap;transform:scaleX(0.9818);transform-origin:0 0;">Match Chosen Variant</div>
<svg style="left:1755px;top:147px;" width="9" height="5.5" viewBox="0 0 9 5.5"><path d="M0 0h9l-4.5 5z" fill="#999"/></svg>
<div style="left:1772px;top:133px;width:135px;height:31px;background:#3f3f46;border:2px solid #55555a;"></div>
<div style="left:1777.50px;top:136.70px;font-size:19.5px;line-height:25px;color:#f1f1f1;white-space:nowrap;transform:scaleX(0.9531);transform-origin:0 0;">Check Anchors</div>
<div style="left:760px;top:170px;width:1123px;height:813px;overflow:hidden;background:#2f2f2f;">
<div style="left:1010px;top:0;width:114px;height:813px;background:#cbcbcb;"></div>
<div style="left:111px;top:-30px;width:900px;height:960px;background:#4a8bc2;border:2px solid #000;border-radius:0px;"></div>
<div style="left:126px;top:-30px;width:870px;height:541px;background:#7cc04b;border:2px solid #000;border-radius:3px;"></div>
<div style="left:141px;top:-30px;width:300px;height:526px;background:#5aa454;border:2px solid #000;border-radius:3px;"></div>
<div style="left:156px;top:1px;width:270px;height:480px;background:#9b2b90;border:2px solid #000;border-radius:3px;"></div>
<div style="left:456px;top:-30px;width:525px;height:526px;background:#35adc9;border:2px solid #000;border-radius:3px;"></div>
<div style="left:471px;top:1px;width:495px;height:105px;background:#c45db4;border:2px solid #000;border-radius:3px;"></div>
<div style="left:486px;top:16px;width:465px;height:75px;background:#d4a58f;border:2px solid #000;border-radius:3px;"></div>
<div style="left:471px;top:121px;width:495px;height:60px;background:#d0a73a;border:2px solid #000;border-radius:3px;"></div>
<div style="left:471px;top:196px;width:495px;height:60px;background:#5a659e;border:2px solid #000;border-radius:3px;"></div>
<div style="left:471px;top:271px;width:495px;height:60px;background:#7fe82f;border:2px solid #000;border-radius:3px;"></div>
<div style="left:471px;top:346px;width:495px;height:60px;background:#1780f0;border:2px solid #000;border-radius:3px;"></div>
<div style="left:486px;top:421px;width:45px;height:60px;background:#955144;border:2px solid #000;border-radius:3px;"></div>
<div style="left:546px;top:421px;width:45px;height:60px;background:#1f9e86;border:2px solid #000;border-radius:3px;"></div>
<div style="left:126px;top:526px;width:870px;height:404px;background:#d63aad;border:2px solid #000;border-radius:3px;"></div>
<div style="left:141px;top:541px;width:840px;height:389px;background:#d636dc;border:2px solid #000;border-radius:3px;"></div>
<div style="left:156px;top:556px;width:810px;height:255px;background:#ee4ccb;border:2px solid #000;border-radius:3px;"></div>
<div style="left:1026px;top:-30px;width:114px;height:136px;background:#66f055;border:2px solid #000;border-radius:3px;"></div>
<div style="left:1026px;top:121px;width:120px;height:150px;background:#dbb098;border:6px solid #a00000;"></div>
<div style="left:1017px;top:112px;width:12px;height:12px;background:#a00000;border-radius:1.5px;"></div>
<div style="left:1095px;top:112px;width:12px;height:12px;background:#a00000;border-radius:1.5px;"></div>
<div style="left:1017px;top:190px;width:12px;height:12px;background:#a00000;border-radius:1.5px;"></div>
<div style="left:1017px;top:268px;width:12px;height:12px;background:#a00000;border-radius:1.5px;"></div>
<div style="left:1095px;top:268px;width:12px;height:12px;background:#a00000;border-radius:1.5px;"></div>
<div style="left:247.75px;top:229.20px;font-size:19.5px;line-height:25px;color:#b344ad;white-space:nowrap;transform:scaleX(0.8663);transform-origin:0 0;">usersR2C1</div>
<div style="left:528.50px;top:229.20px;font-size:19.5px;line-height:25px;color:#606ba2;white-space:nowrap;transform:scaleX(0.8952);transform-origin:0 0;">usersR2</div>
<div style="left:674.45px;top:229.20px;font-size:19.5px;line-height:25px;color:#8879a7;white-space:nowrap;transform:scaleX(0.8971);transform-origin:0 0;">usersR2C2</div>
<div style="left:0;top:406px;width:1123px;height:40px;overflow:hidden;">
<div style="left:519.25px;top:-11.30px;font-size:19.5px;line-height:25px;color:#3db2cd;white-space:nowrap;transform:scaleX(0.9508);transform-origin:0 0;">usersCont</div>
</div>
<div style="left:687.75px;top:41.70px;font-size:19.5px;line-height:25px;color:#deb5a0;white-space:nowrap;transform:scaleX(0.9795);transform-origin:0 0;">tblUser</div>
<div style="left:256.25px;top:228.20px;font-size:19.5px;line-height:25px;color:#f4f4f4;white-space:nowrap;transform:scaleX(0.9578);transform-origin:0 0;">tblUsers</div>
<div style="left:676.25px;top:41.20px;font-size:19.5px;line-height:25px;color:#f4f4f4;white-space:nowrap;transform:scaleX(0.9879);transform-origin:0 0;">tblFName</div>
<div style="left:666.25px;top:138.20px;font-size:19.5px;line-height:25px;color:#f4f4f4;white-space:nowrap;letter-spacing:0.227px;">txtfirstname</div>
<div style="left:667.75px;top:213.20px;font-size:19.5px;line-height:25px;color:#f4f4f4;white-space:nowrap;letter-spacing:0.072px;">txtlastname</div>
<div style="left:691.50px;top:288.20px;font-size:19.5px;line-height:25px;color:#f4f4f4;white-space:nowrap;transform:scaleX(0.9977);transform-origin:0 0;">txtage</div>
<div style="left:665.25px;top:363.20px;font-size:19.5px;line-height:25px;color:#f4f4f4;white-space:nowrap;transform:scaleX(0.9359);transform-origin:0 0;">btnSaveUser</div>
<div style="left:487.00px;top:438.20px;font-size:19.5px;line-height:25px;color:#f4f4f4;white-space:nowrap;transform:scaleX(0.9804);transform-origin:0 0;">tuser</div>
<div style="left:545.30px;top:438.20px;font-size:19.5px;line-height:25px;color:#f4f4f4;white-space:nowrap;transform:scaleX(0.9760);transform-origin:0 0;">fullna</div>
<div style="left:494.25px;top:671.20px;font-size:19.5px;line-height:25px;color:#f4f4f4;white-space:nowrap;letter-spacing:0.162px;">ageDistribution</div>
<div style="left:1049.50px;top:19.20px;font-size:19.5px;line-height:25px;color:#f4f4f4;white-space:nowrap;transform:scaleX(0.9504);transform-origin:0 0;">userMsgBox</div>
<div style="left:1092.25px;top:183.70px;font-size:19.5px;line-height:25px;color:#f4f4f4;white-space:nowrap;transform:scaleX(0.7023);transform-origin:0 0;">FB</div>
<div style="left:1095px;top:190px;width:12px;height:12px;background:#a00000;border-radius:2px;"></div>
<div style="left:288px;top:7px;width:6px;height:6px;border-radius:50%;background:#fff;"></div>
<div style="left:132px;top:238px;width:6px;height:6px;border-radius:50%;background:#fff;"></div>
<div style="left:147px;top:238px;width:6px;height:6px;border-radius:50%;background:#fff;"></div>
<div style="left:162px;top:238px;width:6px;height:6px;border-radius:50%;background:#fff;"></div>
<div style="left:462px;top:238px;width:6px;height:6px;border-radius:50%;background:#fff;"></div>
<div style="left:117px;top:403px;width:6px;height:6px;border-radius:50%;background:#fff;"></div>
<div style="left:715px;top:7px;width:6px;height:6px;border-radius:50%;background:#fff;"></div>
<div style="left:715px;top:22px;width:6px;height:6px;border-radius:50%;background:#fff;"></div>
<div style="left:477px;top:51px;width:6px;height:6px;border-radius:50%;background:#fff;"></div>
<div style="left:492.5px;top:50px;width:6px;height:6px;border-radius:50%;background:#fff;"></div>
<div style="left:715px;top:127px;width:6px;height:6px;border-radius:50%;background:#fff;"></div>
<div style="left:477px;top:148px;width:6px;height:6px;border-radius:50%;background:#fff;"></div>
<div style="left:715px;top:202px;width:6px;height:6px;border-radius:50%;background:#fff;"></div>
<div style="left:477px;top:223px;width:6px;height:6px;border-radius:50%;background:#fff;"></div>
<div style="left:715px;top:277px;width:6px;height:6px;border-radius:50%;background:#fff;"></div>
<div style="left:477px;top:298px;width:6px;height:6px;border-radius:50%;background:#fff;"></div>
<div style="left:715px;top:352px;width:6px;height:6px;border-radius:50%;background:#fff;"></div>
<div style="left:477px;top:373px;width:6px;height:6px;border-radius:50%;background:#fff;"></div>
<div style="left:506px;top:427px;width:6px;height:6px;border-radius:50%;background:#fff;"></div>
<div style="left:566px;top:427px;width:6px;height:6px;border-radius:50%;background:#fff;"></div>
<div style="left:491px;top:448px;width:6px;height:6px;border-radius:50%;background:#fff;"></div>
<div style="left:551px;top:448px;width:6px;height:6px;border-radius:50%;background:#fff;"></div>
<div style="left:558px;top:532px;width:6px;height:6px;border-radius:50%;background:#fff;"></div>
<div style="left:558px;top:547px;width:6px;height:6px;border-radius:50%;background:#fff;"></div>
<div style="left:558px;top:562px;width:6px;height:6px;border-radius:50%;background:#fff;"></div>
<div style="left:132px;top:680px;width:6px;height:6px;border-radius:50%;background:#fff;"></div>
<div style="left:147px;top:681px;width:6px;height:6px;border-radius:50%;background:#fff;"></div>
<div style="left:162px;top:680px;width:6px;height:6px;border-radius:50%;background:#fff;"></div>
<div style="left:1032px;top:28px;width:6px;height:6px;border-radius:50%;background:#fff;"></div>
<div style="left:1098px;top:127px;width:6px;height:6px;border-radius:50%;background:#fff;"></div>
<div style="left:1032px;top:193px;width:6px;height:6px;border-radius:50%;background:#fff;"></div>
<div style="left:0;top:0;width:112px;height:813px;background:#2f2f2f;"></div>
</div>
<div style="left:770px;top:180.5px;width:73px;height:73px;background:#252526;border:1.5px solid #505056;border-radius:50%;"></div>
<svg style="left:770px;top:180.5px;" width="73" height="73" viewBox="0 0 73 73"><path d="M29.5 16.5l7-6.5 7 6.5M29.5 55l7 6.5 7-6.5M17 29.5l-6.5 7 6.5 7M56 29.5l6.5 7-6.5 7" fill="none" stroke="#fff" stroke-width="3.3"/></svg>
<div style="left:853px;top:200.5px;width:35px;height:35px;background:#252526;border:1.5px solid #505056;border-radius:50%;"></div>
<svg style="left:853px;top:200.5px;" width="35" height="35" viewBox="0 0 35 35"><path d="M16.5 11.5l-6.5 6 6.5 6M24.5 11.5l-6.5 6 6.5 6" fill="none" stroke="#fff" stroke-width="3.2"/></svg>
<div style="left:785px;top:262px;width:45px;height:348px;background:#252526;border:2px solid #47474c;border-radius:22.5px / 13px;"></div>
<div style="left:805.5px;top:279px;width:5.5px;height:210px;background:#5a5a5a;border-radius:3px;"></div>
<div style="left:791px;top:338.5px;width:33px;height:17px;background:#9e9e9e;border-radius:2.5px;"></div>
<div style="left:789.50px;top:496.20px;font-size:14px;line-height:18px;color:#f1f1f1;white-space:nowrap;letter-spacing:0.048px;">100%</div>
<div style="left:787px;top:517.5px;width:41px;height:2px;background:#47474c;"></div>
<svg style="left:796px;top:530px;" width="24" height="24" viewBox="0 0 26 26"><rect x="1.6" y="1.6" width="22.8" height="22.8" fill="none" stroke="#fff" stroke-width="2.4"/><path d="M13 5v16M5 13h16" stroke="#fff" stroke-width="1.5"/><path d="M13 3.8l3 3.4h-6zM13 22.2l3-3.4h-6zM3.8 13l3.4-3v6zM22.2 13l-3.4-3v6z" fill="#fff"/></svg>
<svg style="left:796px;top:569.5px;" width="24" height="22.5" viewBox="0 0 26 24"><path d="M1.6 10v12.4h22.8V10" fill="none" stroke="#fff" stroke-width="2.4"/><path d="M1.6 10.6h6M18.4 10.6h6" stroke="#fff" stroke-width="2.4"/><path d="M13 1v12" stroke="#fff" stroke-width="3.4"/><path d="M6.5 11h13L13 18.5z" fill="#fff"/></svg>
<div style="left:1884px;top:170px;width:24px;height:813px;background:#2d2d30;"></div>
<div style="left:1886px;top:172px;width:21px;height:21px;background:#3e3e42;"></div>
<svg style="left:1891px;top:179px;" width="11" height="6" viewBox="0 0 11 6"><path d="M0 6h11l-5.5-6z" fill="#999"/></svg>
<div style="left:1886px;top:285px;width:21px;height:156px;background:#3e3e42;"></div>
<svg style="left:1891px;top:359px;" width="11" height="11" viewBox="0 0 11 11"><rect x="0" y="0.0" width="11" height="1.2" fill="#999"/><rect x="0" y="2.6" width="11" height="1.2" fill="#999"/><rect x="0" y="5.2" width="11" height="1.2" fill="#999"/><rect x="0" y="7.8" width="11" height="1.2" fill="#999"/></svg>
<div style="left:1886px;top:959px;width:21px;height:22px;background:#3e3e42;"></div>
<svg style="left:1891px;top:967px;" width="11" height="6" viewBox="0 0 11 6"><path d="M0 0h11l-5.5 6z" fill="#999"/></svg>
<div style="left:761px;top:986px;width:22px;height:21px;background:#3e3e42;"></div>
<svg style="left:768px;top:991px;" width="6" height="11" viewBox="0 0 6 11"><path d="M6 0v11L0 5.5z" fill="#999"/></svg>
<div style="left:902px;top:986px;width:285px;height:22px;background:#3e3e42;"></div>
<svg style="left:1039px;top:992px;" width="11" height="11" viewBox="0 0 11 11"><rect x="0.0" y="0" width="1.2" height="11" fill="#999"/><rect x="2.6" y="0" width="1.2" height="11" fill="#999"/><rect x="5.2" y="0" width="1.2" height="11" fill="#999"/><rect x="7.8" y="0" width="1.2" height="11" fill="#999"/></svg>
<div style="left:1859px;top:986px;width:22px;height:21px;background:#3e3e42;"></div>
<svg style="left:1867px;top:991px;" width="6" height="11" viewBox="0 0 6 11"><path d="M0 0v11l6-5.5z" fill="#999"/></svg>
</body></html>
